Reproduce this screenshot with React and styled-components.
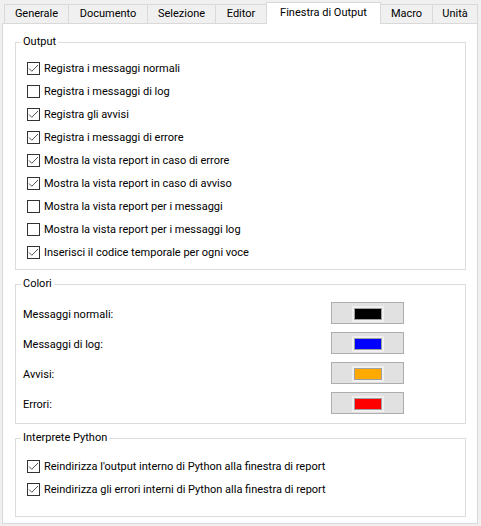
import React from "react";
import styled, { createGlobalStyle } from "styled-components";

const Global = createGlobalStyle`
  html, body { margin: 0; padding: 0; background: #f0f0f0; }
  body { font-family: Roboto, "Noto Sans", sans-serif; font-size: 11px; color: #000; }
  * { box-sizing: border-box; }
`;

const Window = styled.div`
  width: 481px;
  height: 526px;
  padding: 1px 3px 2px 2px;
  display: flex;
  flex-direction: column;
  background: #f0f0f0;
`;

const TabBar = styled.div`
  display: flex;
  align-items: flex-end;
  height: 22px;
  padding-left: 2px;
`;

const Tab = styled.div`
  position: relative;
  width: ${(p) => p.$w}px;
  margin-left: -1px;
  height: ${(p) => (p.$active ? 22 : 19)}px;
  margin-bottom: ${(p) => (p.$active ? -1 : 0)}px;
  z-index: ${(p) => (p.$active ? 2 : 1)};
  background: ${(p) => (p.$active ? "#ffffff" : "#f0f0f0")};
  border: 1px solid #d9d9d9;
  border-bottom: none;
  display: flex;
  align-items: ${(p) => (p.$active ? "flex-start" : "center")};
  padding-top: ${(p) => (p.$active ? 2 : 0)}px;
  justify-content: center;
  white-space: nowrap;
  line-height: 16px;
  &:first-child { margin-left: 0; }
`;

const Pane = styled.div`
  flex: 1;
  background: #fff;
  border: 1px solid #d9d9d9;
  padding: 11px 11px 0 12px;
  display: flex;
  flex-direction: column;
  gap: 7px;
`;

const Group = styled.fieldset`
  margin: 0;
  padding: 0;
  min-width: 0;
  border: 1px solid #dcdcdc;
`;

const Legend = styled.legend`
  margin-left: 5px;
  padding: 0 2px;
  line-height: 14px;
  height: 14px;
`;

const List = styled.div`
  display: flex;
  flex-direction: column;
  padding: ${(p) => p.$pad};
`;

const CheckRow = styled.label`
  display: flex;
  align-items: center;
  height: 23px;
  gap: 4px;
  white-space: nowrap;
`;

const Box = styled.span`
  width: 13px;
  height: 13px;
  border: 1px solid #333;
  background: #fff;
  display: flex;
  flex-shrink: 0;
`;

const ColorGrid = styled.div`
  display: grid;
  grid-template-columns: 308px 73px;
  row-gap: 8px;
  align-items: center;
  padding: 11px 0 9px 7px;
`;

const ColorLabel = styled.span`
  padding-top: 2px;
`;

const ColorButton = styled.div`
  width: 73px;
  height: 22px;
  border: 1px solid #adadad;
  background: #e1e1e1;
  display: flex;
  align-items: center;
  justify-content: center;
  padding-top: 1px;
`;

const SwatchFrame = styled.div`
  padding: 2px;
  background: #f0f0f0;
  display: flex;
`;

const Swatch = styled.div`
  width: 28px;
  height: 12px;
  border: 1px solid #a0a0a0;
  background: ${(p) => p.$c};
`;

function Check({ checked, children }) {
  return (
    <CheckRow>
      <Box>
        {checked && (
          <svg width="11" height="11" viewBox="0 0 11 11">
            <polyline
              points="1,5.5 3.8,8.3 10,2"
              fill="none"
              stroke="#555"
              strokeWidth="1"
            />
          </svg>
        )}
      </Box>
      <span>{children}</span>
    </CheckRow>
  );
}

const tabs = [
  ["Generale", 65],
  ["Documento", 80],
  ["Selezione", 69],
  ["Editor", 52],
  ["Finestra di Output", 115, true],
  ["Macro", 53],
  ["Unità", 46],
];

const outputItems = [
  ["Registra i messaggi normali", true],
  ["Registra i messaggi di log", false],
  ["Registra gli avvisi", true],
  ["Registra i messaggi di errore", true],
  ["Mostra la vista report in caso di errore", true],
  ["Mostra la vista report in caso di avviso", true],
  ["Mostra la vista report per i messaggi", false],
  ["Mostra la vista report per i messaggi log", false],
  ["Inserisci il codice temporale per ogni voce", true],
];

const colors = [
  ["Messaggi normali:", "#000000"],
  ["Messaggi di log:", "#0000ff"],
  ["Avvisi:", "#ffaa00"],
  ["Errori:", "#ff0000"],
];

export default function App() {
  return (
    <>
      <Global />
      <Window>
        <TabBar>
          {tabs.map(([t, w, a]) => (
            <Tab key={t} $w={w} $active={!!a}>
              {t}
            </Tab>
          ))}
        </TabBar>
        <Pane>
          <Group>
            <Legend>Output</Legend>
            <List $pad="8px 0 5px 11px">
              {outputItems.map(([t, c]) => (
                <Check key={t} checked={c}>
                  {t}
                </Check>
              ))}
            </List>
          </Group>
          <Group>
            <Legend>Colori</Legend>
            <ColorGrid>
              {colors.map(([l, c]) => (
                <React.Fragment key={l}>
                  <ColorLabel>{l}</ColorLabel>
                  <ColorButton>
                    <SwatchFrame>
                      <Swatch $c={c} />
                    </SwatchFrame>
                  </ColorButton>
                </React.Fragment>
              ))}
            </ColorGrid>
          </Group>
          <Group>
            <Legend>Interprete Python</Legend>
            <List $pad="10px 0 15px 11px">
              <Check checked>
                Reindirizza l'output interno di Python alla finestra di report
              </Check>
              <Check checked>
                Reindirizza gli errori interni di Python alla finestra di report
              </Check>
            </List>
          </Group>
        </Pane>
      </Window>
    </>
  );
}
